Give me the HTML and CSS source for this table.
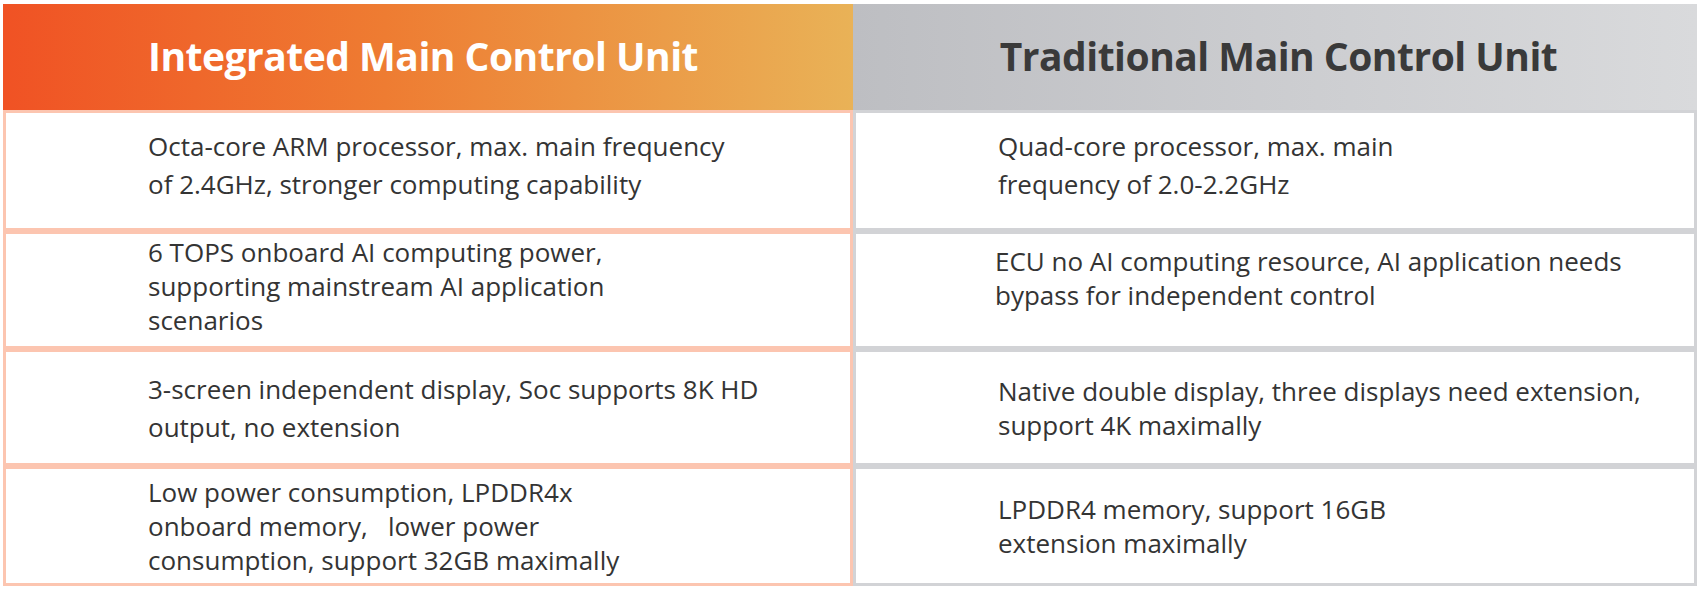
FILE: index.html
```html
<!DOCTYPE html>
<html lang="en">
<head>
<meta charset="utf-8">
<title>Main Control Unit Comparison</title>
<link rel="stylesheet" href="styles.css">
</head>
<body>
<div class="compare">
  <div class="head head-int">Integrated Main Control Unit</div>
  <div class="head head-trad">Traditional Main Control Unit</div>

  <div class="cell cell-int loose high"><p>Octa-core ARM processor, max. main frequency<br>of 2.4GHz, stronger computing capability</p></div>
  <div class="cell cell-trad loose high"><p>Quad-core processor, max. main<br>frequency of 2.0-2.2GHz</p></div>

  <div class="cell cell-int"><p>6 TOPS onboard AI computing power,<br>supporting mainstream AI application<br>scenarios</p></div>
  <div class="cell cell-trad raised"><p>ECU no AI computing resource, AI application needs<br>bypass for independent control</p></div>

  <div class="cell cell-int loose low"><p>3-screen independent display, Soc supports 8K HD<br>output, no extension</p></div>
  <div class="cell cell-trad low"><p>Native double display, three displays need extension,<br>support 4K maximally</p></div>

  <div class="cell cell-int low"><p>Low power consumption, LPDDR4x<br>onboard memory,&nbsp;&nbsp; lower power<br>consumption, support 32GB maximally</p></div>
  <div class="cell cell-trad low"><p>LPDDR4 memory, support 16GB<br>extension maximally</p></div>
</div>
</body>
</html>
```
FILE: styles.css
```css
html, body {
  margin: 0;
  padding: 0;
  background: #ffffff;
}

body {
  padding: 4px 0 0 3px;
  font-family: "Open Sans", "Noto Sans", sans-serif;
  color: #343434;
}

.compare {
  display: grid;
  grid-template-columns: 850px 844px;
  grid-template-rows: 106px 121px 118px 117px 120px;
}

.head {
  display: flex;
  align-items: center;
  justify-content: center;
  font-weight: 700;
  font-size: 39px;
  letter-spacing: -0.5px;
  padding-bottom: 4px;
}

.head-int {
  color: #ffffff;
  background: linear-gradient(90deg, #f05224 0%, #ee7c32 45%, #e9b257 100%);
  padding-right: 10px;
}

.head-trad {
  color: #3a3a3a;
  background: linear-gradient(90deg, #bdbec2 0%, #cdced1 55%, #d9dadc 100%);
  padding-left: 7px;
}

.cell {
  display: flex;
  align-items: center;
  padding-left: 142px;
  border: 3px solid #fcc5b0;
  background: #ffffff;
  padding-bottom: 8px;
}

.cell-trad {
  border-color: #d2d3d6;
}

.cell p {
  margin: 0;
  font-size: 26px;
  line-height: 34px;
  white-space: nowrap;
}

.loose p {
  line-height: 38px;
}

.high {
  padding-bottom: 12px;
}

.low {
  padding-bottom: 0;
}

.raised {
  padding-bottom: 24px;
  padding-left: 139px;
}
```
